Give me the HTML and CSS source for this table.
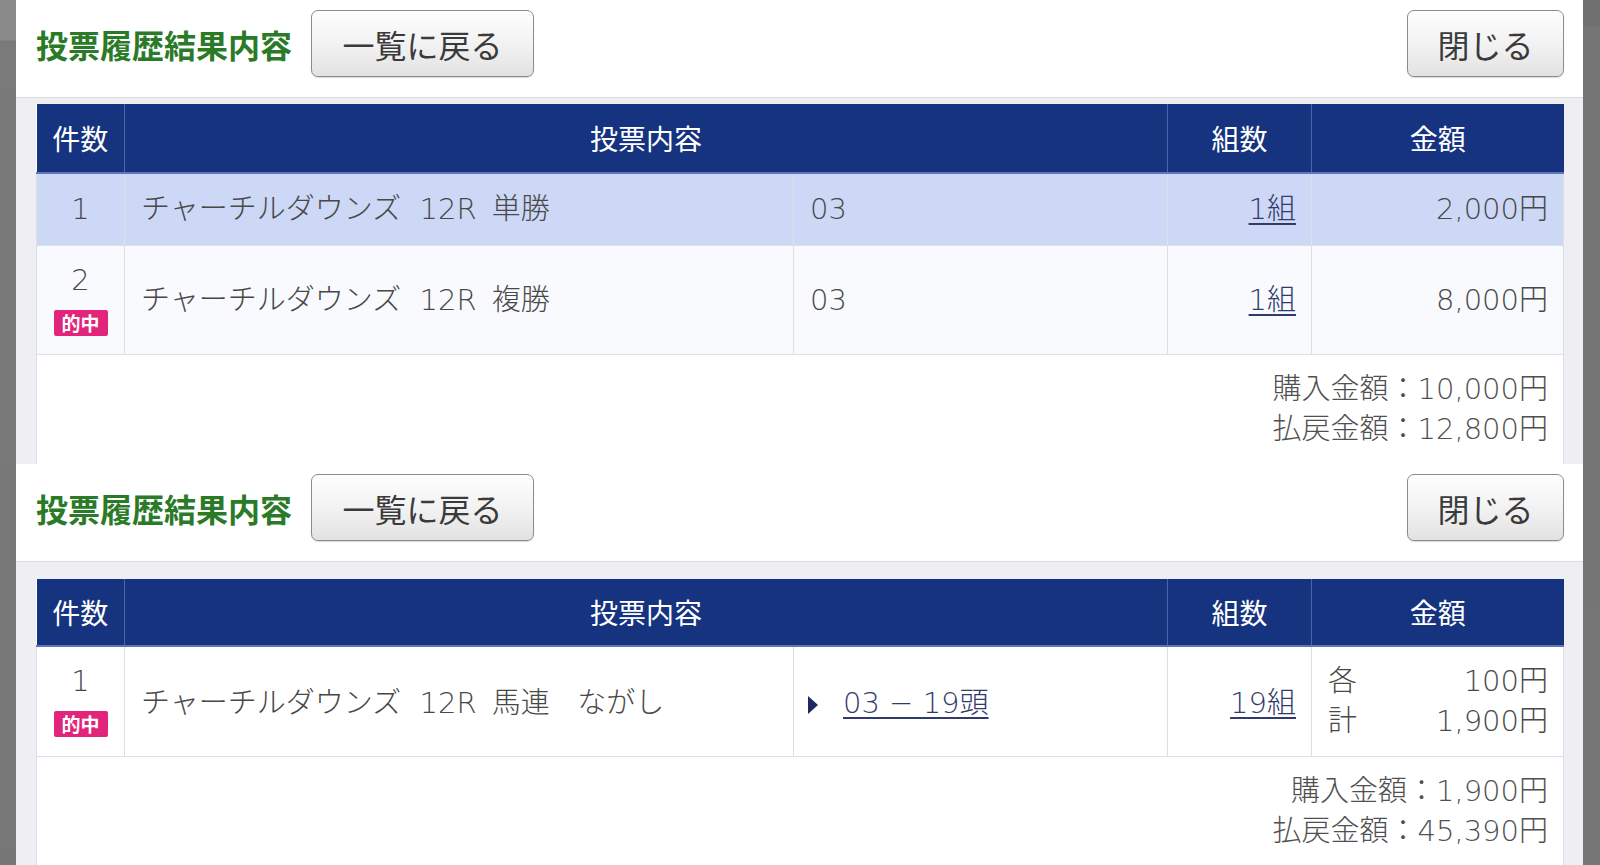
FILE: index.html
```html
<!DOCTYPE html>
<html lang="ja">
<head>
<meta charset="utf-8">
<title>投票履歴結果内容</title>
<link rel="stylesheet" href="styles.css">
</head>
<body>
<div class="screen">
  <div class="side side-left"></div>
  <div class="stack">
    <section class="panel">
      <header class="panel-head">
        <h1 class="title">投票履歴結果内容</h1>
        <button class="btn btn-back">一覧に戻る</button>
        <button class="btn btn-close">閉じる</button>
      </header>
      <div class="panel-body body-1">
        <table class="bets">
          <colgroup>
            <col class="c-no"><col class="c-name"><col class="c-num"><col class="c-sets"><col class="c-amt">
          </colgroup>
          <thead>
            <tr class="head-1"><th>件数</th><th colspan="2">投票内容</th><th>組数</th><th>金額</th></tr>
          </thead>
          <tbody>
            <tr class="row-sel r-72">
              <td class="no">1</td>
              <td>チャーチルダウンズ&nbsp;&nbsp;12R&nbsp;&#8201;単勝</td>
              <td>03</td>
              <td class="right"><a class="lnk">1組</a></td>
              <td class="right">2,000円</td>
            </tr>
            <tr class="row-alt r-109">
              <td class="no"><div class="no-num">2</div><span class="hit">的中</span></td>
              <td>チャーチルダウンズ&nbsp;&nbsp;12R&nbsp;&#8201;複勝</td>
              <td>03</td>
              <td class="right"><a class="lnk">1組</a></td>
              <td class="right">8,000円</td>
            </tr>
            <tr class="sum r-110">
              <td colspan="5"><div>購入金額：10,000円</div><div>払戻金額：12,800円</div></td>
            </tr>
          </tbody>
        </table>
      </div>
    </section>
    <section class="panel">
      <header class="panel-head">
        <h1 class="title">投票履歴結果内容</h1>
        <button class="btn btn-back">一覧に戻る</button>
        <button class="btn btn-close">閉じる</button>
      </header>
      <div class="panel-body body-2">
        <table class="bets">
          <colgroup>
            <col class="c-no"><col class="c-name"><col class="c-num"><col class="c-sets"><col class="c-amt">
          </colgroup>
          <thead>
            <tr class="head-2"><th>件数</th><th colspan="2">投票内容</th><th>組数</th><th>金額</th></tr>
          </thead>
          <tbody>
            <tr class="row-white r-110">
              <td class="no"><div class="no-num">1</div><span class="hit">的中</span></td>
              <td>チャーチルダウンズ&nbsp;&nbsp;12R&nbsp;&#8201;馬連&nbsp;&nbsp;&nbsp;ながし</td>
              <td><span class="tri"></span><a class="lnk">03 − 19頭</a></td>
              <td class="right"><a class="lnk">19組</a></td>
              <td class="amt2">
                <div class="amt-line"><span>各</span><span>100円</span></div>
                <div class="amt-line"><span>計</span><span>1,900円</span></div>
              </td>
            </tr>
            <tr class="sum r-110">
              <td colspan="5"><div>購入金額：1,900円</div><div>払戻金額：45,390円</div></td>
            </tr>
          </tbody>
        </table>
      </div>
    </section>
  </div>
  <div class="side side-right"></div>
</div>
</body>
</html>
```

FILE: styles.css
```css
html, body {
  margin: 0;
  padding: 0;
  background: #777777;
}
body {
  font-family: "DejaVu Sans", "Noto Sans CJK JP", "Noto Sans", sans-serif;
  font-weight: 300;
  color: #484848;
}
.screen {
  display: flex;
  width: 1600px;
  height: 865px;
  overflow: hidden;
}
.side {
  flex: none;
  background: #777777;
}
.side-left {
  width: 16px;
  background: linear-gradient(#8a8a8a 0, #8a8a8a 40px, #7a7a7a 41px, #777 100%);
}
.side-right {
  width: 17px;
  background: linear-gradient(#6f6f6f 0, #6f6f6f 26px, #757575 27px, #767676 100%);
}
.stack {
  width: 1567px;
  flex: none;
  display: flex;
  flex-direction: column;
}
.panel {
  background: #ffffff;
  display: flex;
  flex-direction: column;
}
.panel-head {
  display: flex;
  align-items: center;
  height: 67px;
  padding: 10px 19px 20px 20px;
  border-bottom: 1px solid #dadada;
  background: #fff;
}
.title {
  margin: 0 19px 0 0;
  font-family: "Noto Sans CJK JP", sans-serif;
  font-size: 32px;
  font-weight: 700;
  color: #2a7a28;
  line-height: 40px;
  letter-spacing: 0;
}
.btn {
  font-family: "Noto Sans CJK JP", sans-serif;
  font-weight: 400;
  font-size: 32px;
  line-height: 40px;
  color: #3a3a3a;
  height: 67px;
  border: 1.5px solid #8c8c8c;
  border-radius: 7px;
  background: linear-gradient(#fefefe, #f1f1f1 55%, #e2e2e2);
  box-shadow: 0 1px 1px rgba(0,0,0,0.15);
  padding: 0;
}
.btn-back { width: 223px; }
.btn-close { width: 157px; margin-left: auto; }

.panel-body {
  background: #efeff3;
  padding: 6px 20px 0 20px;
}
.body-2 { padding-top: 17px; }

.bets {
  width: 1527px;
  border-collapse: collapse;
  table-layout: fixed;
  background: #fff;
  font-size: 29px;
}
.c-no { width: 88px; }
.c-name { width: 669px; }
.c-num { width: 374px; }
.c-sets { width: 144px; }
.c-amt { width: 252px; }

.bets th {
  background: #16337f;
  color: #fff;
  font-family: "Noto Sans CJK JP", sans-serif;
  font-weight: 400;
  font-size: 28px;
  border-left: 1px solid #4e64a6;
  border-bottom: 2px solid #5f75b8;
  padding: 0;
}
.bets th:first-child { border-left: none; }
.head-1 { height: 69px; }
.head-2 { height: 67px; }

.bets td {
  border: 1px solid #dcdfe6;
  padding: 0 15px 0 16px;
  vertical-align: middle;
  white-space: nowrap;
  line-height: 40px;
}
.bets td.no {
  text-align: center;
  padding: 0;
}
.no-num { line-height: 34px; }
.hit {
  display: inline-block;
  margin-top: 13px;
  width: 54px;
  height: 26px;
  line-height: 26px;
  background: #e2247a;
  color: #fff;
  font-family: "Noto Sans CJK JP", sans-serif;
  font-size: 19px;
  font-weight: 700;
  border-radius: 2px;
  vertical-align: top;
}
.right { text-align: right; }
.r-72 { height: 72px; }
.r-109 { height: 109px; }
.r-110 { height: 110px; }
.row-sel td { background: #cdd8f6; }
.row-alt td { background: #f8fafe; }
.row-white td { background: #fff; }
.row-white td:not(.no) { padding-top: 4px; }

.lnk {
  color: #323a6c;
  text-decoration: underline;
  text-underline-offset: 4px;
  text-decoration-thickness: 1.5px;
}
.tri {
  display: inline-block;
  width: 0;
  height: 0;
  border-top: 9px solid transparent;
  border-bottom: 9px solid transparent;
  border-left: 10px solid #1c2a5e;
  margin-left: -2px;
  margin-right: 25px;
  vertical-align: -1px;
}
.amt2 { padding: 0 15px 0 15px; }
.row-white td.amt2 { padding-top: 0; }
.amt-line {
  display: flex;
  justify-content: space-between;
  line-height: 40px;
}
.sum td {
  text-align: right;
  background: #fff;
  border-bottom: none;
  color: #505050;
  line-height: 40px;
  padding-top: 0;
}
```
